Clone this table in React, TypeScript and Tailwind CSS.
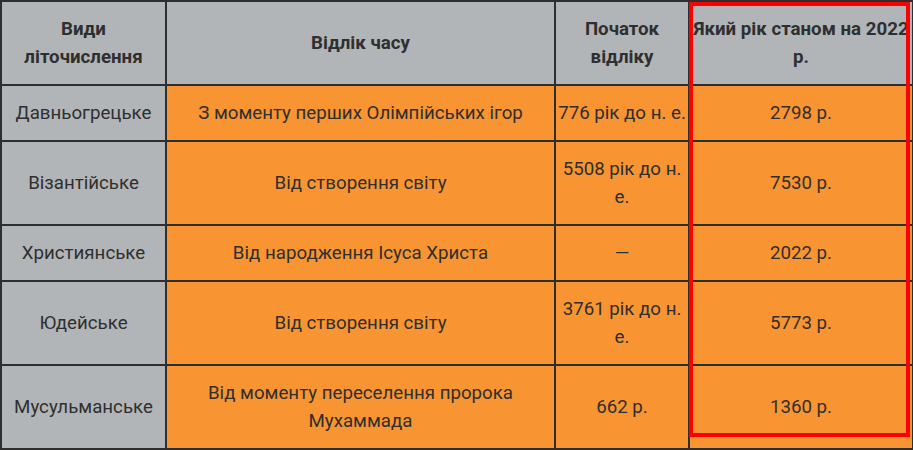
const rows = [
  { name: "Давньогрецьке", from: "З моменту перших Олімпійських ігор", start: "776 рік до н. е.", year: "2798 р." },
  { name: "Візантійське", from: "Від створення світу", start: "5508 рік до н. е.", year: "7530 р." },
  { name: "Християнське", from: "Від народження Ісуса Христа", start: "—", year: "2022 р." },
  { name: "Юдейське", from: "Від створення світу", start: "3761 рік до н. е.", year: "5773 р." },
  { name: "Мусульманське", from: "Від моменту переселення пророка Мухаммада", start: "662 р.", year: "1360 р." },
];

const App = () => {
  return (
    <div className="relative w-[913px] h-[450px] overflow-hidden bg-white font-['Roboto',sans-serif] text-[18.7px] leading-[28px] text-[#2f2f2f]">
      <table className="table-fixed border-collapse w-[912px] text-center">
        <colgroup>
          <col className="w-[165px]" />
          <col className="w-[389px]" />
          <col className="w-[134px]" />
          <col className="w-[224px]" />
        </colgroup>
        <thead>
          <tr className="h-[84px] bg-[#b2b5b8] font-bold">
            <th className="border-2 border-[#2e2e2e] px-1">Види літочислення</th>
            <th className="border-2 border-[#2e2e2e] px-1">Відлік часу</th>
            <th className="border-2 border-[#2e2e2e] px-1">Початок відліку</th>
            <th className="border-2 border-[#2e2e2e] px-0">Який рік станом на 2022 р.</th>
          </tr>
        </thead>
        <tbody>
          {rows.map((r) => (
            <tr key={r.name} className="bg-[#f89532]">
              <td className="border-2 border-[#2e2e2e] bg-[#b2b5b8] px-1 py-[13px]">{r.name}</td>
              <td className="border-2 border-[#2e2e2e] px-4 py-[13px]">{r.from}</td>
              <td className="border-2 border-[#2e2e2e] px-0 py-[13px]">{r.start}</td>
              <td className="border-2 border-[#2e2e2e] px-1 py-[13px]">{r.year}</td>
            </tr>
          ))}
        </tbody>
      </table>
      <div className="absolute left-[689px] top-[2px] w-[221px] h-[435px] border-4 border-[#ff0000]" />
    </div>
  );
};

export default App;
